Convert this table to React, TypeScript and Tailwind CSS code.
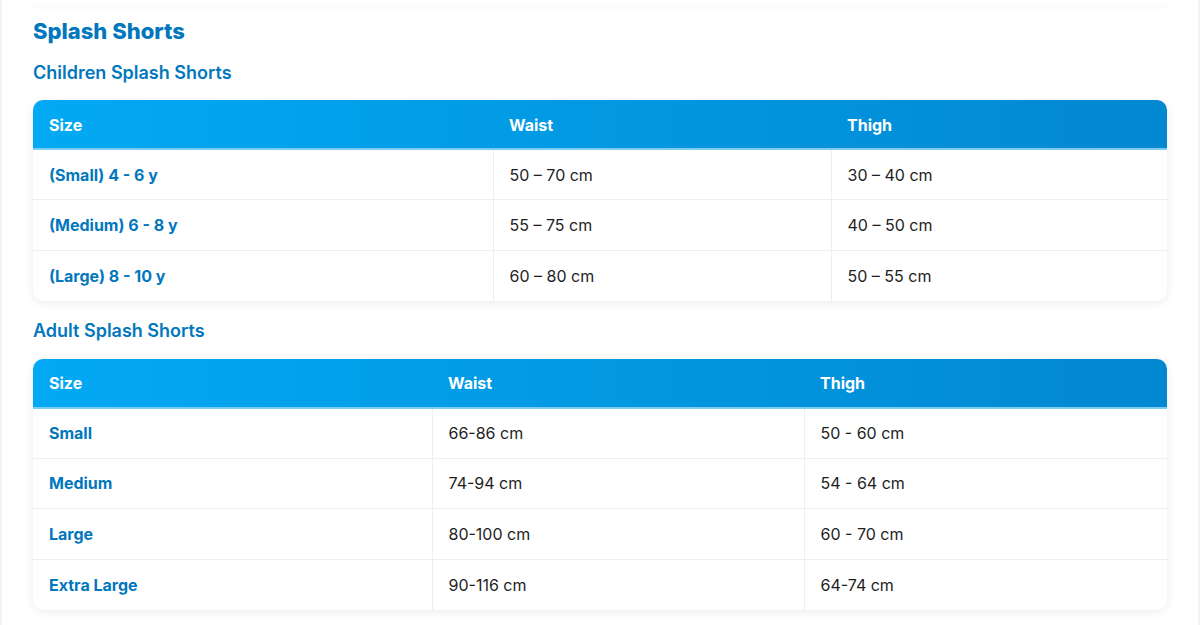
const children = [
  ["(Small) 4 - 6 y", "50 – 70 cm", "30 – 40 cm"],
  ["(Medium) 6 - 8 y", "55 – 75 cm", "40 – 50 cm"],
  ["(Large) 8 - 10 y", "60 – 80 cm", "50 – 55 cm"],
];

const adults = [
  ["Small", "66-86 cm", "50 - 60 cm"],
  ["Medium", "74-94 cm", "54 - 64 cm"],
  ["Large", "80-100 cm", "60 - 70 cm"],
  ["Extra Large", "90-116 cm", "64-74 cm"],
];

type TableProps = {
  rows: string[][];
  widths: [string, string, string];
};

const SizeTable = ({ rows, widths }: TableProps) => {
  return (
    <div className="overflow-hidden rounded-[10px] bg-white shadow-[0_2px_10px_rgba(0,0,0,0.08)]">
      <table className="w-full table-fixed border-collapse text-left">
        <colgroup>
          <col className={widths[0]} />
          <col className={widths[1]} />
          <col className={widths[2]} />
        </colgroup>
        <thead>
          <tr className="bg-gradient-to-r from-[#03a9f4] to-[#0288d1] text-white">
            {["Size", "Waist", "Thigh"].map((h) => (
              <th
                key={h}
                className="h-[49px] border-b-2 border-[#7ccbf3] px-4 pt-px text-[16px] font-bold"
              >
                {h}
              </th>
            ))}
          </tr>
        </thead>
        <tbody>
          {rows.map((r, i) => (
            <tr key={i} className="border-b border-[#eeeeee] last:border-b-0">
              <td className="h-[50.5px] px-4 text-[16px] font-bold text-[#0277bd]">
                {r[0]}
              </td>
              <td className="h-[50.5px] border-l border-[#eeeeee] px-4 text-[16px] text-[#1e1e1e]">
                {r[1]}
              </td>
              <td className="h-[50.5px] border-l border-[#eeeeee] px-4 text-[16px] text-[#1e1e1e]">
                {r[2]}
              </td>
            </tr>
          ))}
        </tbody>
      </table>
    </div>
  );
};

export default function App() {
  return (
    <div
      className="min-h-[625px] border-x-2 border-[#f3f3f3] bg-white"
      style={{ fontFamily: "Inter, 'Noto Sans', sans-serif" }}
    >
      <div className="px-[31px]">
        <div className="h-[3px] rounded-b-[10px] bg-white shadow-[0_3px_8px_rgba(0,0,0,0.06)]" />
        <h2 className="mt-[14px] text-[22px] font-extrabold leading-[28px] text-[#0277bd]">
          Splash Shorts
        </h2>
        <h3 className="mt-[16px] text-[18px] font-semibold leading-[24px] text-[#0277bd]">
          Children Splash Shorts
        </h3>
        <div className="mt-[15px]">
          <SizeTable rows={children} widths={["w-[460px]", "w-[338px]", "w-[337px]"]} />
        </div>
        <h3 className="mt-[18px] text-[18px] font-semibold leading-[24px] text-[#0277bd]">
          Adult Splash Shorts
        </h3>
        <div className="mt-[16px]">
          <SizeTable rows={adults} widths={["w-[399px]", "w-[372px]", "w-[364px]"]} />
        </div>
      </div>
    </div>
  );
}
